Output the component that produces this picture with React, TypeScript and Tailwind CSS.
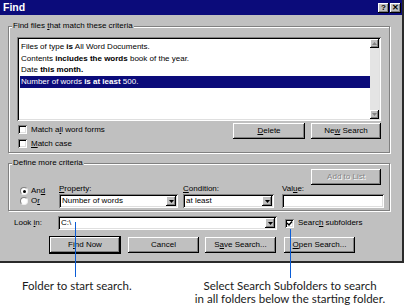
import React from "react";

const raised =
  "bg-[#c0c0c0] shadow-[inset_-1px_-1px_0_#000,inset_1px_1px_0_#fff,inset_-2px_-2px_0_#808080]";
const sunken =
  "bg-white shadow-[inset_1px_1px_0_#808080,inset_-1px_-1px_0_#fff,inset_2px_2px_0_#000,inset_-2px_-2px_0_#dfdfdf]";
const etched = "border border-[#808080] shadow-[inset_1px_1px_0_#fff,1px_1px_0_#fff]";

function Btn({
  children,
  className = "",
  def = false,
  disabled = false,
}: {
  children: React.ReactNode;
  className?: string;
  def?: boolean;
  disabled?: boolean;
}) {
  return (
    <div
      className={`${className} h-[16px] flex items-center justify-center ${
        def ? "outline outline-1 outline-black" : ""
      } ${raised} ${disabled ? "text-[#868686] [text-shadow:1px_1px_0_#fff]" : "text-black"}`}
    >
      <span className="whitespace-pre">{children}</span>
    </div>
  );
}

function Check({ checked = false }: { checked?: boolean }) {
  return (
    <div className={`w-[9px] h-[9px] shrink-0 ${sunken} flex items-center justify-center`}>
      {checked && (
        <svg width="7" height="7" viewBox="0 0 7 7">
          <path d="M1 3 L3 5 L6 1.5" stroke="black" strokeWidth="1.4" fill="none" />
        </svg>
      )}
    </div>
  );
}

function Radio({ on = false }: { on?: boolean }) {
  return (
    <div className="w-[8px] h-[8px] rounded-full bg-white border border-t-[#808080] border-l-[#808080] border-r-[#eee] border-b-[#eee] flex items-center justify-center">
      {on && <div className="w-[3px] h-[3px] rounded-full bg-black" />}
    </div>
  );
}

function Combo({ value, className = "" }: { value: string; className?: string }) {
  return (
    <div className={`${className} h-[14px] ${sunken} flex items-center pl-[3px] pr-[2px]`}>
      <span className="flex-1 truncate">{value}</span>
      <div className={`w-[10px] h-[10px] ${raised} flex items-center justify-center`}>
        <svg width="5" height="3" viewBox="0 0 5 3">
          <path d="M0 0 H5 L2.5 3 Z" fill="black" />
        </svg>
      </div>
    </div>
  );
}

export default function App() {
  return (
    <div
      className="w-[404px] h-[306px] bg-white relative overflow-hidden text-[8px] leading-none text-black"
      style={{ fontFamily: '"Liberation Sans", Arial, sans-serif' }}
    >
      {/* Dialog */}
      <div className="h-[263px] bg-[#c0c0c0] border-r-2 border-b-2 border-[#2a2a2a] flex flex-col">
        {/* Title bar */}
        <div className="h-[15px] bg-[#0b0b7a] flex items-center pl-[3px] pr-[1px]">
          <span className="text-white font-bold text-[10.5px]">Find</span>
          <div className="ml-auto flex gap-[1px]">
            <div className={`w-[11px] h-[10px] ${raised} flex items-center justify-center font-bold text-[8px]`}>?</div>
            <div className={`w-[11px] h-[10px] ${raised} flex items-center justify-center font-bold text-[8px]`}>✕</div>
          </div>
        </div>

        {/* Group 1 */}
        <div className={`relative ml-[8px] w-[382px] mt-[11px] h-[127px] ${etched} px-[8px] pt-[10px]`}>
          <span className="absolute -top-[5px] left-[3px] px-[1px] bg-[#c0c0c0]">
            Find files <u>t</u>hat match these criteria
          </span>
          <div className={`h-[84px] ${sunken} flex p-[2px]`}>
            <div className="flex-1 pl-[1px] pt-[2px] whitespace-nowrap">
              <div className="leading-[11.5px] px-[1px]">
                Files of type <b>is</b> All Word Documents.
              </div>
              <div className="leading-[11.5px] px-[1px]">
                Contents <b>includes the words</b> book of the year.
              </div>
              <div className="leading-[11.5px] px-[1px]">
                Date <b>this month.</b>
              </div>
              <div className="leading-[12px] px-[1px] bg-[#0b0b7a] text-white">
                Number of words <b>is at least</b> 500.
              </div>
            </div>
            <div className="w-[9px] bg-[#e4e4e4] flex flex-col justify-between">
              <div className={`h-[9px] ${raised} flex items-center justify-center`}>
                <svg width="5" height="3" viewBox="0 0 5 3">
                  <path d="M2.5 0 L5 3 H0 Z" fill="#808080" />
                </svg>
              </div>
              <div className={`h-[9px] ${raised} flex items-center justify-center`}>
                <svg width="5" height="3" viewBox="0 0 5 3">
                  <path d="M0 0 H5 L2.5 3 Z" fill="#808080" />
                </svg>
              </div>
            </div>
          </div>
          <div className="flex mt-[2px]">
            <div className="flex flex-col gap-[5px] pt-[2px] pl-[1px]">
              <div className="flex items-center gap-[4px]">
                <Check />
                <span>
                  Match a<u>l</u>l word forms
                </span>
              </div>
              <div className="flex items-center gap-[4px]">
                <Check />
                <span>
                  <u>M</u>atch case
                </span>
              </div>
            </div>
            <div className="ml-auto flex gap-[6px]">
              <Btn className="w-[72px]">
                <u>D</u>elete
              </Btn>
              <Btn className="w-[70px]">
                Ne<u>w</u> Search
              </Btn>
            </div>
          </div>
        </div>

        {/* Group 2 */}
        <div className={`relative ml-[8px] w-[382px] mt-[10px] h-[48px] ${etched} pt-[5px]`}>
          <span className="absolute -top-[5px] left-[3px] px-[1px] bg-[#c0c0c0]">Define more criteria</span>
          <div className="flex justify-end pr-[8px]">
            <Btn className="w-[70px] h-[15px]" disabled>
              Add to List
            </Btn>
          </div>
          <div className="flex items-end">
            <div className="flex flex-col gap-[2px] pl-[11px] w-[50px] pb-[3px]">
              <div className="flex items-center gap-[3px]">
                <Radio on />
                <span>
                  An<u>d</u>
                </span>
              </div>
              <div className="flex items-center gap-[3px]">
                <Radio />
                <span>
                  O<u>r</u>
                </span>
              </div>
            </div>
            <div className="flex flex-col gap-[1px]">
              <span>
                <u>P</u>roperty:
              </span>
              <Combo value="Number of words" className="w-[119px]" />
            </div>
            <div className="flex flex-col gap-[1px] ml-[5px]">
              <span>
                <u>C</u>ondition:
              </span>
              <Combo value="at least" className="w-[91px]" />
            </div>
            <div className="flex flex-col gap-[1px] ml-[8px]">
              <span>
                Val<u>u</u>e:
              </span>
              <div className={`w-[102px] h-[14px] ${sunken}`} />
            </div>
          </div>
        </div>

        {/* Look in */}
        <div className="flex items-center mt-[5px] pl-[14px]">
          <span className="w-[44px]">
            Look <u>i</u>n:
          </span>
          <Combo value="C:\" className="w-[219px]" />
          <div className="flex items-center gap-[4px] ml-[8px]">
            <Check checked />
            <span>
              Searc<u>h</u> subfolders
            </span>
          </div>
        </div>

        {/* Buttons */}
        <div className="flex mt-[7px] pl-[50px]">
          <Btn def className="w-[70px]">
            F<u>i</u>nd Now
          </Btn>
          <Btn className="w-[71px] ml-[8px]">Cancel</Btn>
          <Btn className="w-[71px] ml-[6px]">
            S<u>a</u>ve Search...
          </Btn>
          <Btn className="w-[71px] ml-[8px]">
            <u>O</u>pen Search...
          </Btn>
        </div>
      </div>

      {/* Callout lines */}
      <div className="absolute left-[75px] top-[222px] w-[1px] h-[55px] bg-[#0a5cd6]" />
      <div className="absolute left-[290px] top-[229px] w-[1px] h-[49px] bg-[#0a5cd6]" />

      {/* Annotations */}
      <div
        className="flex pt-[16px] text-[11.5px] leading-[13px] text-[#1a1a1a] whitespace-nowrap"
        style={{ fontFamily: 'Lato, "Open Sans", sans-serif' }}
      >
        <div className="w-[180px] pl-[22px]">Folder to start search.</div>
        <div className="w-[220px] text-center">
          Select Search Subfolders to search
          <br />
          in all folders below the starting folder.
        </div>
      </div>
    </div>
  );
}
